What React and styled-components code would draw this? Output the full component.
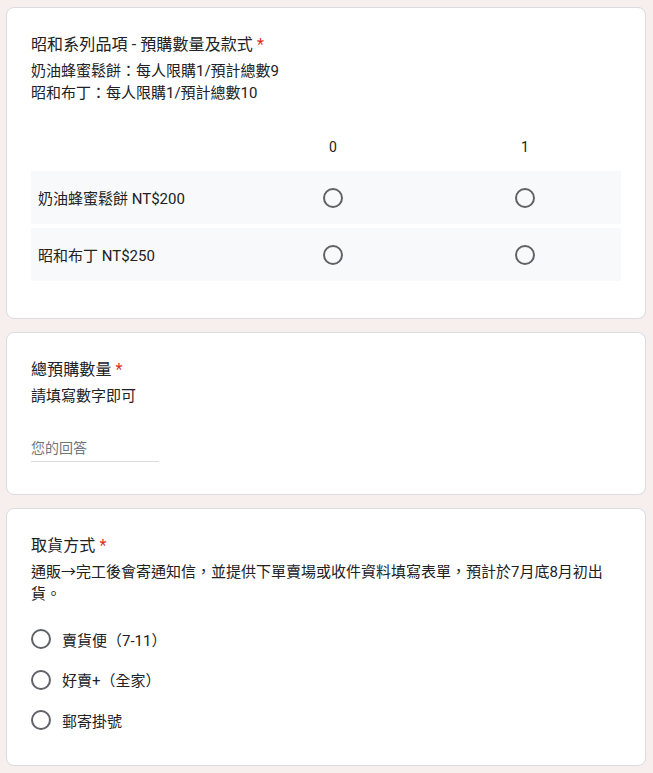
import React from 'react'
import styled, { createGlobalStyle } from 'styled-components'

const GlobalStyle = createGlobalStyle`
  body {
    margin: 0;
    background: #f6efee;
    font-family: Roboto, "Noto Sans CJK TC", Arial, sans-serif;
    color: #202124;
  }
`

const Page = styled.div`
  display: flex;
  flex-direction: column;
  gap: 13px;
  padding: 7px 7px 8px 6px;
`

const Card = styled.div`
  background: #fff;
  border: 1px solid #dadce0;
  border-radius: 8px;
  padding: 25px 24px 24px;
`

const Title = styled.div`
  font-size: 16px;
  line-height: 24px;
  letter-spacing: 0.1px;
`

const Star = styled.span`
  color: #d93025;
  margin-left: 4px;
`

const Desc = styled.div`
  margin-top: 3px;
  font-size: 15px;
  line-height: 22px;
`

const Grid = styled.div`
  margin: 20px 0 13px;
  display: grid;
  grid-template-columns: 206px 1fr 1fr;
  row-gap: 4px;
`

const Head = styled.div`
  height: 43px;
  padding-top: 2px;
  box-sizing: border-box;
  display: flex;
  align-items: center;
  justify-content: center;
  font-size: 14px;
`

const RowLabel = styled.div`
  background: #f8f9fa;
  height: 53px;
  display: flex;
  align-items: center;
  padding-left: 7px;
  font-size: 15px;
`

const Cell = styled.div`
  background: #f8f9fa;
  height: 53px;
  display: flex;
  align-items: center;
  justify-content: center;
`

const Radio = styled.span`
  display: inline-block;
  width: 20px;
  height: 20px;
  box-sizing: border-box;
  border: 2px solid #5f6368;
  border-radius: 50%;
  flex-shrink: 0;
`

const Answer = styled.div`
  margin-top: 29px;
  width: 128px;
  height: 25px;
  border-bottom: 1px solid #dadce0;
  font-size: 14px;
  line-height: 24px;
  color: #70757a;
  margin-bottom: 8px;
`

const Options = styled.div`
  margin-top: 14px;
  display: flex;
  flex-direction: column;
`

const Option = styled.label`
  height: 40.5px;
  display: flex;
  align-items: center;
  gap: 11px;
  font-size: 15px;
`

const rows = ['奶油蜂蜜鬆餅 NT$200', '昭和布丁 NT$250']

export default function App() {
  return (
    <Page>
      <GlobalStyle />
      <Card>
        <Title>昭和系列品項 - 預購數量及款式<Star>*</Star></Title>
        <Desc>
          奶油蜂蜜鬆餅：每人限購1/預計總數9<br />
          昭和布丁：每人限購1/預計總數10
        </Desc>
        <Grid>
          <div />
          <Head>0</Head>
          <Head>1</Head>
          {rows.map(r => (
            <React.Fragment key={r}>
              <RowLabel>{r}</RowLabel>
              <Cell><Radio /></Cell>
              <Cell><Radio /></Cell>
            </React.Fragment>
          ))}
        </Grid>
      </Card>
      <Card>
        <Title>總預購數量<Star>*</Star></Title>
        <Desc>請填寫數字即可</Desc>
        <Answer>您的回答</Answer>
      </Card>
      <Card>
        <Title>取貨方式<Star>*</Star></Title>
        <Desc>通販→完工後會寄通知信，並提供下單賣場或收件資料填寫表單，預計於7月底8月初出貨。</Desc>
        <Options>
          {['賣貨便（7-11）', '好賣+（全家）', '郵寄掛號'].map(o => (
            <Option key={o}><Radio />{o}</Option>
          ))}
        </Options>
      </Card>
    </Page>
  )
}
